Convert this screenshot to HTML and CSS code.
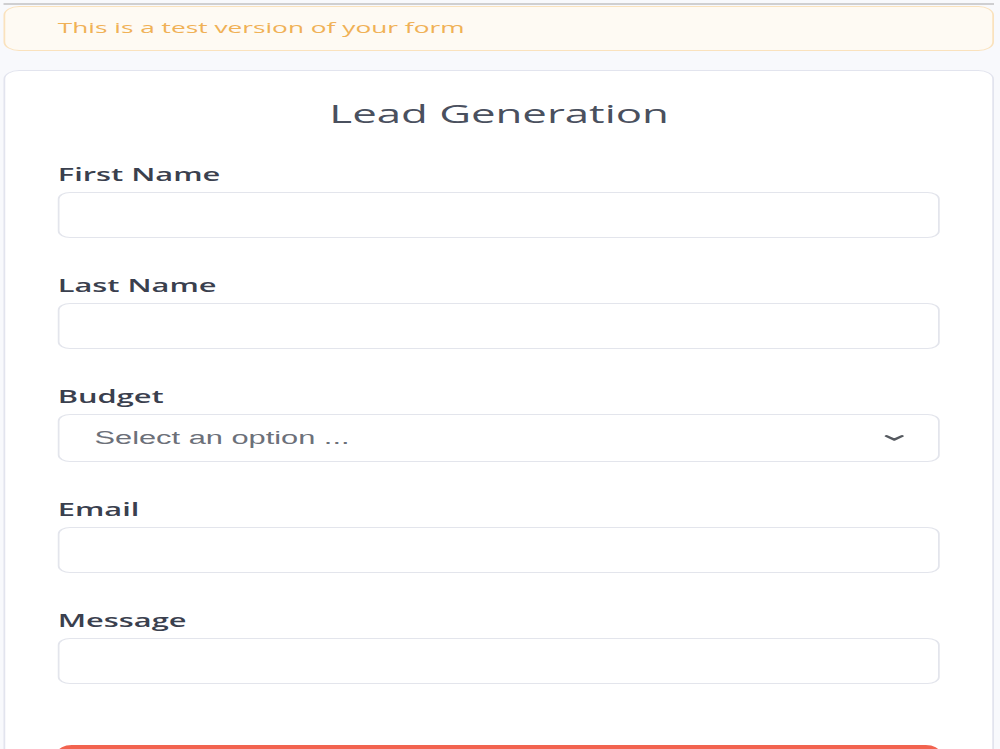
FILE: index.html
```html
<!DOCTYPE html>
<html lang="en">
<head>
    <meta charset="UTF-8">
    <meta name="viewport" content="width=device-width, initial-scale=1.0">
    <title>Lead Generation</title>
    <link rel="stylesheet" href="styles.css">
</head>
<body>
    <div class="page">
        <div class="top-line"></div>

        <div class="test-notice">This is a test version of your form</div>

        <form class="form-card" action="#" method="post">
            <h1 class="form-title">Lead Generation</h1>

            <div class="field">
                <label class="field-label" for="first-name">First Name</label>
                <input class="field-input" type="text" id="first-name" name="first_name">
            </div>

            <div class="field">
                <label class="field-label" for="last-name">Last Name</label>
                <input class="field-input" type="text" id="last-name" name="last_name">
            </div>

            <div class="field">
                <label class="field-label" for="budget">Budget</label>
                <div class="select-wrap">
                    <select class="field-input field-select" id="budget" name="budget">
                        <option value="">Select an option ...</option>
                        <option value="small">Under $1,000</option>
                        <option value="medium">$1,000 - $5,000</option>
                        <option value="large">Over $5,000</option>
                    </select>
                    <!-- dropdown chevron -->
                    <svg class="select-arrow" viewBox="0 0 12 8" aria-hidden="true">
                        <path d="M1.5 2 L6 5.6 L10.5 2" fill="none" stroke="#55595f" stroke-width="2" stroke-linecap="round" stroke-linejoin="round"/>
                    </svg>
                </div>
            </div>

            <div class="field">
                <label class="field-label" for="email">Email</label>
                <input class="field-input" type="email" id="email" name="email">
            </div>

            <div class="field">
                <label class="field-label" for="message">Message</label>
                <input class="field-input" type="text" id="message" name="message">
            </div>

            <div class="form-actions">
                <button class="submit-button" type="submit">Submit</button>
            </div>
        </form>
    </div>
</body>
</html>
```

FILE: styles.css
```css
:root {
    --page-bg: #f8f9fc;
    --card-border: #e2e4ee;
    --input-border: #e3e5ec;
    --notice-bg: #fefaf3;
    --notice-border: #fae2bd;
    --notice-text: #f0b156;
    --title-color: #4a505e;
    --label-color: #3a404e;
    --placeholder: #6c7079;
    --accent: #f2634f;
    --white: #fff;
}

* {
    margin: 0;
    padding: 0;
    box-sizing: border-box;
}

html,
body {
    overflow: hidden;
}

body {
    font-family: 'Open Sans', 'Noto Sans', sans-serif;
    background-color: var(--page-bg);
}

/* The form is laid out at its narrow mobile width and then
   stretched across the window, like the captured screen */
.page {
    width: calc(1000px / 1.75);
    padding: 0 3px 0 2px;
    transform: scaleX(1.75);
    transform-origin: 0 0;
}

.top-line {
    height: 2px;
    margin-top: 3px;
    background-color: #cfcfd1;
}

.test-notice {
    display: flex;
    align-items: center;
    height: 45px;
    margin-top: 1px;
    padding: 0 30px 3px;
    background-color: var(--notice-bg);
    border: 1px solid var(--notice-border);
    border-radius: 9px;
    color: var(--notice-text);
    font-size: 15px;
}

.form-card {
    margin-top: 19px;
    padding: 26px 30px 40px;
    background-color: var(--white);
    border: 1px solid var(--card-border);
    border-radius: 9px;
}

.form-title {
    color: var(--title-color);
    font-size: 25px;
    font-weight: 400;
    line-height: 32px;
    text-align: center;
    margin-bottom: 33px;
}

.field {
    margin-bottom: 35px;
}

.field-label {
    display: block;
    color: var(--label-color);
    font-size: 17.6px;
    font-weight: 600;
    line-height: 24px;
    margin-bottom: 6px;
}

.field-input {
    display: block;
    width: 100%;
    height: 46px;
    padding: 0 20px;
    background-color: var(--white);
    border: 1px solid var(--input-border);
    border-radius: 7px;
    outline: none;
    font-family: 'Open Sans', sans-serif;
    font-size: 16px;
}

.select-wrap {
    position: relative;
}

.field-select {
    height: 48px;
    appearance: none;
    -webkit-appearance: none;
    color: var(--placeholder);
    font-family: 'Liberation Sans', Arial, sans-serif;
    font-size: 17.6px;
    cursor: pointer;
}

.select-arrow {
    position: absolute;
    right: 20px;
    top: 20px;
    width: 12px;
    height: 8px;
    pointer-events: none;
}

.form-actions {
    padding-top: 26px;
}

.submit-button {
    display: block;
    width: 100%;
    height: 50px;
    background-color: var(--accent);
    color: var(--white);
    border: none;
    border-radius: 8px;
    font-family: 'Open Sans', sans-serif;
    font-size: 18px;
    font-weight: 600;
    cursor: pointer;
}
```
